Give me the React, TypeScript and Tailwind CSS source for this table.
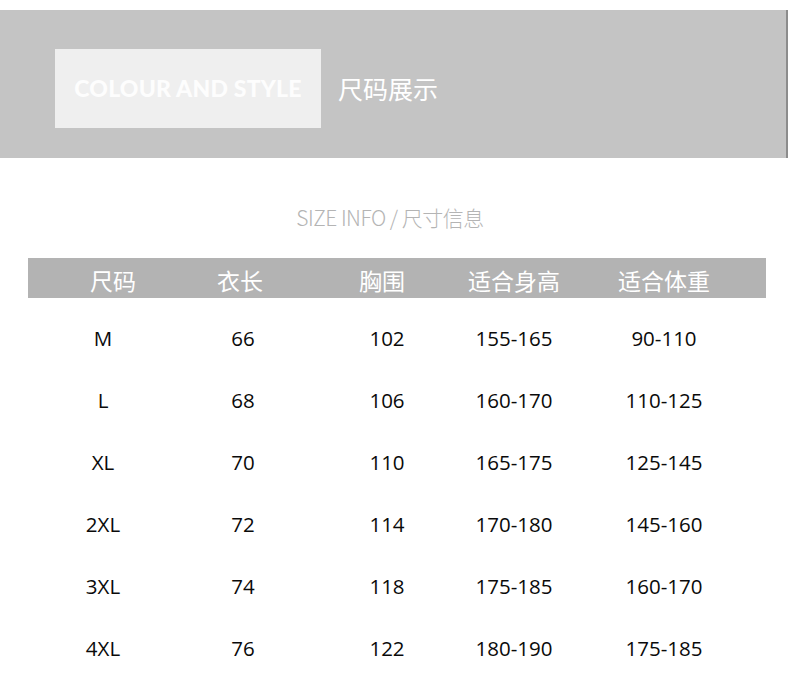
const rows = [
  ["M", "66", "102", "155-165", "90-110"],
  ["L", "68", "106", "160-170", "110-125"],
  ["XL", "70", "110", "165-175", "125-145"],
  ["2XL", "72", "114", "170-180", "145-160"],
  ["3XL", "74", "118", "175-185", "160-170"],
  ["4XL", "76", "122", "180-190", "175-185"],
];

const headers = ["尺码", "衣长", "胸围", "适合身高", "适合体重"];

const cjk = { fontFamily: '"Noto Sans CJK SC", "Noto Sans", sans-serif' };

const App: React.FC = () => {
  return (
    <div className="w-[790px] h-[681px] overflow-hidden bg-white pt-[10px]">
      {/* banner */}
      <div className="flex items-start w-[788px] h-[148px] bg-[#c4c4c4] border-r-2 border-[#8c8c8c] pl-[55px] pt-[39px]">
        <div className="flex items-center justify-center w-[266px] h-[79px] bg-[#efefef]">
          <span
            className="text-[23px] font-black tracking-[0.2px] text-[#fdfdfd] leading-none"
            style={{ fontFamily: "Lato, sans-serif" }}
          >
            COLOUR AND STYLE
          </span>
        </div>
        <div className="flex items-center h-[79px] ml-[17px]">
          <span className="text-[25px] text-white leading-none" style={cjk}>
            尺码展示
          </span>
        </div>
      </div>

      {/* sub title */}
      <div className="flex justify-center pr-[10px] mt-[46px] h-[26px] items-center">
        <span className="text-[21px] font-light text-[#b4b4b4] leading-none tracking-[-0.5px]" style={cjk}>
          SIZE INFO / 尺寸信息
        </span>
      </div>

      {/* header bar */}
      <div
        className="grid grid-cols-[150px_130px_158px_96px_204px] ml-[28px] mt-[28px] w-[738px] h-[40px] bg-[#b3b3b3] pt-[4px]"
        style={cjk}
      >
        {headers.map((h, i) => (
          <div
            key={h}
            className={
              "flex items-center justify-center text-[23px] text-white leading-none " +
              (i === 0 ? "pl-[20px]" : i === 1 ? "pr-[6px]" : i === 2 ? "pr-[10px]" : "")
            }
          >
            <span className="whitespace-nowrap">{h}</span>
          </div>
        ))}
      </div>

      {/* rows */}
      <div className="ml-[28px] w-[738px] mt-[9px]" style={{ fontFamily: '"Open Sans", sans-serif' }}>
        {rows.map((r) => (
          <div key={r[0]} className="grid grid-cols-[150px_130px_158px_96px_204px] h-[62px] items-center">
            {r.map((c, j) => (
              <div key={j} className="flex justify-center text-[20.5px] text-[#0a0a0a] leading-none">
                <span className="whitespace-nowrap">{c}</span>
              </div>
            ))}
          </div>
        ))}
      </div>
    </div>
  );
};

export default App;
